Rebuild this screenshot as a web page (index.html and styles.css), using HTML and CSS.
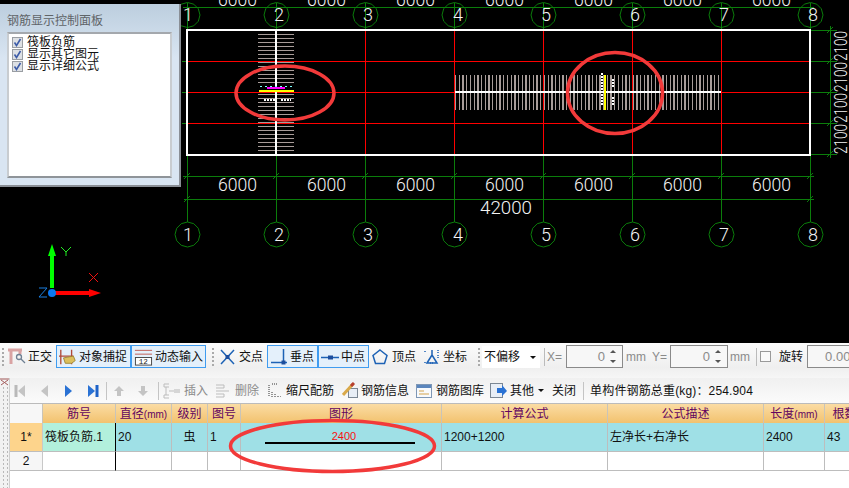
FILE: index.html
```html
<!DOCTYPE html>
<html lang="zh-CN">
<head>
<meta charset="utf-8">
<title>钢筋显示控制面板</title>
<link rel="stylesheet" href="styles.css">
</head>
<body>
<div class="app">
  <section class="cad">
    <svg class="drawing" width="849" height="343" viewBox="0 0 849 343">
      <defs>
        <polygon id="bubble" points="12.5,0 10.8,6.25 6.25,10.8 0,12.5 -6.25,10.8 -10.8,6.25 -12.5,0 -10.8,-6.25 -6.25,-10.8 0,-12.5 6.25,-10.8 10.8,-6.25"/>
      </defs>
      <g class="green crisp">
        <path d="M187.5 3V30M276.5 3V30M365.5 3V30M454.5 3V30M543.5 3V30M632.5 3V30M721.5 3V30M810.5 3V30"/>
        <path d="M187.5 155V222M276.5 155V222M365.5 155V222M454.5 155V222M543.5 155V222M632.5 155V222M721.5 155V222M810.5 155V222"/>
        <path d="M183 7.5H814M183 176.5H814M184 199.5H814"/>
        <path d="M182 61.5H187M182 92.5H187M182 123.5H187"/>
        <path d="M810 30.5H837M810 61.5H837M810 92.5H837M810 123.5H837M810 154.5H837M830.5 26V158"/>
      </g>
      <g class="green">
        <path d="M184 179l6-6M273 179l6-6M362 179l6-6M451 179l6-6M540 179l6-6M629 179l6-6M718 179l6-6M807 179l6-6M184 202l6-6M807 202l6-6"/>
        <path d="M827 33l6-6M827 64l6-6M827 95l6-6M827 126l6-6M827 157l6-6"/>
        <use href="#bubble" x="187.5" y="15"/><use href="#bubble" x="276.5" y="15"/><use href="#bubble" x="365.5" y="15"/><use href="#bubble" x="454.5" y="15"/>
        <use href="#bubble" x="543.5" y="15"/><use href="#bubble" x="632.5" y="15"/><use href="#bubble" x="721.5" y="15"/><use href="#bubble" x="810.5" y="15"/>
        <use href="#bubble" x="187.5" y="234.5"/><use href="#bubble" x="276.5" y="234.5"/><use href="#bubble" x="365.5" y="234.5"/><use href="#bubble" x="454.5" y="234.5"/>
        <use href="#bubble" x="543.5" y="234.5"/><use href="#bubble" x="632.5" y="234.5"/><use href="#bubble" x="721.5" y="234.5"/><use href="#bubble" x="810.5" y="234.5"/>
      </g>
      <path class="red crisp" d="M187 61.5H810M187 92.5H810M187 123.5H810M276.5 30V155M365.5 30V155M454.5 30V155M543.5 30V155M632.5 30V155M721.5 30V155"/>
      <line class="hatch crisp" x1="276" y1="30" x2="276" y2="155"/>
      <line class="hatch hatch-wide crisp" x1="455" y1="92.5" x2="721" y2="92.5"/>
      <path class="rebar" d="M276 30V155M455 92H721"/>
      <g class="detail crisp">
        <path class="d-black" d="M258 88.5H294"/>
        <path class="d-cyan" d="M260 86.5H294"/>
        <path class="d-magenta" d="M267 87.5H285"/>
        <path class="d-yellow" d="M259 91H294M604.5 75V110"/>
        <path class="d-dots" d="M264 99.5H275M281 99.5H291M602 73V105M612.5 79V87M612.5 97V105"/>
      </g>
      <rect class="outline" x="187" y="30" width="623" height="125"/>
      <g class="label">
        <text x="218" y="6" textLength="39" lengthAdjust="spacingAndGlyphs">6000</text><text x="307" y="6" textLength="39" lengthAdjust="spacingAndGlyphs">6000</text><text x="396" y="6" textLength="39" lengthAdjust="spacingAndGlyphs">6000</text><text x="485" y="6" textLength="39" lengthAdjust="spacingAndGlyphs">6000</text><text x="574" y="6" textLength="39" lengthAdjust="spacingAndGlyphs">6000</text><text x="663" y="6" textLength="39" lengthAdjust="spacingAndGlyphs">6000</text><text x="752" y="6" textLength="39" lengthAdjust="spacingAndGlyphs">6000</text>
        <text x="218" y="191" textLength="39" lengthAdjust="spacingAndGlyphs">6000</text><text x="307" y="191" textLength="39" lengthAdjust="spacingAndGlyphs">6000</text><text x="396" y="191" textLength="39" lengthAdjust="spacingAndGlyphs">6000</text><text x="485" y="191" textLength="39" lengthAdjust="spacingAndGlyphs">6000</text><text x="574" y="191" textLength="39" lengthAdjust="spacingAndGlyphs">6000</text><text x="663" y="191" textLength="39" lengthAdjust="spacingAndGlyphs">6000</text><text x="752" y="191" textLength="39" lengthAdjust="spacingAndGlyphs">6000</text>
        <text x="480" y="214" textLength="52" lengthAdjust="spacingAndGlyphs">42000</text>
        <text transform="translate(847 154) rotate(-90)" textLength="30" lengthAdjust="spacingAndGlyphs">2100</text>
        <text transform="translate(847 123) rotate(-90)" textLength="30" lengthAdjust="spacingAndGlyphs">2100</text>
        <text transform="translate(847 92) rotate(-90)" textLength="30" lengthAdjust="spacingAndGlyphs">2100</text>
        <text transform="translate(847 61) rotate(-90)" textLength="30" lengthAdjust="spacingAndGlyphs">2100</text>
      </g>
      <g class="label axis-no">
        <text x="188" y="21">1</text><text x="279" y="21">2</text><text x="368" y="21">3</text><text x="458" y="21">4</text><text x="546" y="21">5</text><text x="635" y="21">6</text><text x="724" y="21">7</text><text x="813" y="21">8</text>
        <text x="188" y="241">1</text><text x="279" y="241">2</text><text x="368" y="241">3</text><text x="458" y="241">4</text><text x="546" y="241">5</text><text x="635" y="241">6</text><text x="724" y="241">7</text><text x="813" y="241">8</text>
      </g>
      <g class="ucs">
        <path class="u-green" d="M52 250V288" />
        <polygon class="u-green-f" points="52,244 56,256 48,256"/>
        <path class="u-red" d="M52 293H92"/>
        <polygon class="u-red-f" points="101,293 89,289 89,297"/>
        <circle class="u-blue-f" cx="52" cy="293" r="4"/>
        <path class="u-thin-g" d="M61 247L66 252L71 247M66 252V256"/>
        <path class="u-thin-r" d="M89 273L98 282M98 273L89 282"/>
        <path class="u-thin-b" d="M39 288H47L39 297H47"/>
      </g>
    </svg>
    <aside class="panel">
      <h2 class="panel-title">钢筋显示控制面板</h2>
      <ul class="panel-list">
        <li class="panel-item"><span class="check"><svg width="9" height="9" viewBox="0 0 9 9"><path d="M1.5 4.5L3.5 7.5L7.5 1" /></svg></span>筏板负筋</li>
        <li class="panel-item"><span class="check"><svg width="9" height="9" viewBox="0 0 9 9"><path d="M1.5 4.5L3.5 7.5L7.5 1" /></svg></span>显示其它图元</li>
        <li class="panel-item"><span class="check"><svg width="9" height="9" viewBox="0 0 9 9"><path d="M1.5 4.5L3.5 7.5L7.5 1" /></svg></span>显示详细公式</li>
      </ul>
    </aside>
  </section>

  <div class="toolbar snapbar">
    <span class="grip m2"></span>
    <svg class="m4" width="19" height="17" viewBox="0 0 19 17"><path class="ic-pink" d="M0 2H14M3 2V16M12 2V6"/><circle class="ic-lens" cx="11" cy="9" r="2.5"/><path class="ic-lens" d="M13 11L17 15"/></svg>
    <span class="tlabel m1">正交</span>
    <span class="tbtn w75 m4"><svg width="18" height="18" viewBox="0 0 20 18"><path class="ic-red" d="M2 1V17M14 1V17M0 8H16"/><path class="ic-hand" d="M5 10L16 8L18 13L14 16H7Z"/></svg><span class="tlabel">对象捕捉</span></span>
    <span class="tbtn w75"><svg width="19" height="18" viewBox="0 0 20 18"><path class="ic-red-thin" d="M1 2H19M1 6H19"/><rect class="ic-box" x="1.5" y="9.5" width="17" height="8"/><text class="ic-num" x="5" y="16.500">12</text></svg><span class="tlabel">动态输入</span></span>
    <span class="grip m6"></span>
    <svg class="m6" width="15" height="16" viewBox="0 0 15 16"><path class="ic-blue" d="M1 1L14 15M14 1L1 15"/><rect class="ic-blue-f" x="5.500" y="6" width="4" height="4"/></svg>
    <span class="tlabel m4">交点</span>
    <span class="tbtn w51 m4"><svg width="18" height="18" viewBox="0 0 18 18"><path class="ic-blue" d="M1 14.500H17M13.500 1V14"/><rect class="ic-blue-f" x="11.500" y="12.500" width="4" height="4"/></svg><span class="tlabel">垂点</span></span>
    <span class="tbtn w51"><svg width="18" height="18" viewBox="0 0 18 18"><path class="ic-blue" d="M0 9.500H18"/><rect class="ic-blue-f" x="7" y="7.500" width="5" height="4"/></svg><span class="tlabel">中点</span></span>
    <svg class="m3" width="16" height="16" viewBox="0 0 16 16"><polygon class="ic-blue" points="8,1 15,6.500 12.500,14.500 3.500,14.500 1,6.500"/></svg>
    <span class="tlabel m4">顶点</span>
    <svg class="m8" width="16" height="16" viewBox="0 0 16 16"><path class="ic-blue" d="M3 14L8 6L13 14ZM8 6V1"/><path class="ic-dots" d="M1 2V4M14 1V4M1 13V15M14 6V9M6 14H9"/></svg>
    <span class="tlabel m3">坐标</span>
    <span class="grip m11"></span>
    <span class="combo m2">不偏移<i class="caret"></i></span>
    <span class="vsep m4"></span>
    <span class="tlabel dim lat w16 m2">X=</span>
    <span class="spin w57 m3"><span class="spin-val">0</span><span class="spin-arrows"><i class="up"></i><i class="down"></i></span></span>
    <span class="tlabel dim lat w21 m3">mm</span>
    <span class="tlabel dim lat w15 m5">Y=</span>
    <span class="spin w58 m3"><span class="spin-val">0</span><span class="spin-arrows"><i class="up"></i><i class="down"></i></span></span>
    <span class="tlabel dim lat w21 m2">mm</span>
    <span class="vsep m5"></span>
    <span class="box m3"></span>
    <span class="tlabel m8">旋转</span>
    <span class="spin spin-cut w60 m4"><span class="spin-val">0.00</span></span>
  </div>

  <div class="lower">
    <div class="gutter">
      <svg class="gutter-close" width="9" height="8" viewBox="0 0 9 8"><path d="M0 1H9M1 2L8 7M8 2L1 7"/></svg>
    </div>
    <main class="editor">
      <div class="toolbar rebarbar">
        <svg class="m4" width="12" height="14" viewBox="0 0 12 14"><path class="nv-off" d="M2 1V13"/><polygon class="nv-off-f" points="11,1 4,7 11,13"/></svg>
        <svg class="m13" width="12" height="14" viewBox="0 0 12 14"><polygon class="nv-off-f" points="9,1 2,7 9,13"/></svg>
        <svg class="m11" width="12" height="14" viewBox="0 0 12 14"><polygon class="nv-on-f" points="3,1 10,7 3,13"/></svg>
        <svg class="m13" width="12" height="14" viewBox="0 0 12 14"><polygon class="nv-on-f" points="1,1 8,7 1,13"/><path class="nv-on" d="M10 1V13"/></svg>
        <span class="vsep short m7"></span>
        <svg class="m6" width="12" height="12" viewBox="0 0 12 12"><polygon class="nv-off-f" points="6,1 11,6 8,6 8,11 4,11 4,6 1,6"/></svg>
        <svg class="m12" width="12" height="12" viewBox="0 0 12 12"><polygon class="nv-off-f" points="6,11 11,6 8,6 8,1 4,1 4,6 1,6"/></svg>
        <span class="vsep short m9"></span>
        <svg class="m4" width="17" height="16" viewBox="0 0 17 16"><path class="ic-gray" d="M6 1H1V4H6M6 12H1V15H6M6 8H11M3 4V12"/><rect class="ic-gray-f" x="11" y="6" width="6" height="4"/></svg>
        <span class="tlabel dim m4">插入</span>
        <svg class="m7" width="15" height="16" viewBox="0 0 15 16"><path class="ic-gray" d="M1 2H9V5H1M1 11H9V14H1M1 8H14"/></svg>
        <span class="tlabel dim m5">删除</span>
        <svg class="m9" width="13" height="15" viewBox="0 0 13 15"><path class="ic-dark" d="M1 2V14M4 1H10M4 14V8M7 14V10M10 14V12M13 14V13"/></svg>
        <span class="tlabel m5">缩尺配筋</span>
        <svg class="m8" width="17" height="17" viewBox="0 0 17 17"><rect class="ic-sheet" x="6.500" y="6.500" width="9" height="9"/><path class="ic-pencil" d="M1 13L11 2"/><path class="ic-pen-tip" d="M9 4L12 1"/></svg>
        <span class="tlabel m2">钢筋信息</span>
        <svg class="m7" width="16" height="14" viewBox="0 0 16 14"><rect class="ic-win" x="0.500" y="0.500" width="15" height="13"/><path class="ic-win-bar" d="M1 2.500H15"/><path class="ic-win-line" d="M3 7H8M3 10H13"/></svg>
        <span class="tlabel m4">钢筋图库</span>
        <svg class="m6" width="17" height="15" viewBox="0 0 17 15"><rect class="ic-sheet" x="0.500" y="0.500" width="12" height="14"/><polygon class="nv-on-f" points="7,5 12,5 12,2 17,8 12,13 12,10 7,10"/></svg>
        <span class="tlabel m3">其他</span>
        <i class="caret small m4"></i>
        <span class="tlabel m8">关闭</span>
        <span class="vsep short m7"></span>
        <span class="tlabel lat total m6">单构件钢筋总重(kg)：254.904</span>
      </div>
      <div class="grid-wrap">
        <table class="grid">
          <colgroup>
            <col class="c-row"><col class="c-no"><col class="c-dia"><col class="c-grade"><col class="c-fig"><col class="c-shape"><col class="c-calc"><col class="c-desc"><col class="c-len"><col class="c-qty">
          </colgroup>
          <thead>
            <tr><th class="corner"></th><th>筋号</th><th>直径<span class="unit">(mm)</span></th><th>级别</th><th>图号</th><th>图形</th><th>计算公式</th><th>公式描述</th><th>长度<span class="unit">(mm)</span></th><th>根数</th></tr>
          </thead>
          <tbody>
            <tr class="row-active">
              <td class="rowhead active">1*</td><td class="mint freeze">筏板负筋.1</td><td>20</td><td class="center">虫</td><td>1</td>
              <td class="shape"><span class="shape-dim">2400</span><span class="shape-bar"></span></td>
              <td>1200+1200</td><td>左净长+右净长</td><td>2400</td><td>43</td>
            </tr>
            <tr class="row-empty">
              <td class="rowhead">2</td><td class="freeze"></td><td></td><td></td><td></td><td></td><td></td><td></td><td></td><td></td>
            </tr>
          </tbody>
        </table>
      </div>
    </main>
  </div>
</div>
<svg class="marks" width="849" height="488" viewBox="0 0 849 488">
  <ellipse cx="285" cy="93" rx="49" ry="27"/>
  <ellipse cx="615" cy="93" rx="47.500" ry="40.500"/>
  <ellipse cx="332.500" cy="446" rx="102" ry="25.500"/>
</svg>
</body>
</html>
```

FILE: styles.css
```css
* { box-sizing: border-box; }
html, body { margin: 0; padding: 0; }
body {
  position: relative;
  width: 849px;
  height: 488px;
  overflow: hidden;
  background: #fff;
  font: 12px/1 "Liberation Sans", "Noto Sans CJK SC", sans-serif;
  color: #111;
}
.app { display: flex; flex-direction: column; height: 488px; }

/* CAD canvas */
.cad { position: relative; height: 343px; flex: none; background: #000; overflow: hidden; }
.drawing { display: block; }
.drawing path, .drawing polygon, .drawing line, .drawing rect { fill: none; }
.crisp { shape-rendering: crispEdges; }
.green path, .green use { stroke: #0b7d0b; stroke-width: 1; fill: none; }
.red { stroke: #f00; stroke-width: 1; }
.hatch { stroke: #a89c99; stroke-width: 36; stroke-dasharray: 1 3; }
.hatch-wide { stroke-width: 35; stroke-dasharray: 1.300 2.400; }
.rebar { stroke: #fff; stroke-width: 2; }
.outline { stroke: #fff; stroke-width: 2; }
.d-black { stroke: #000; stroke-width: 6; }
.d-cyan { stroke: #7ff; stroke-width: 1; stroke-dasharray: 2 3; }
.d-magenta { stroke: #f0f; stroke-width: 2; }
.d-yellow { stroke: #ff0; stroke-width: 2; }
.d-dots { stroke: #fff; stroke-width: 2; stroke-dasharray: 2 1; }
.label text { fill: #f4f4f4; font: 300 19px "Roboto", "Liberation Sans", sans-serif; }
.axis-no { text-anchor: middle; }
.axis-no text { font-size: 18px; }
.ucs .u-green { stroke: #0f0; stroke-width: 4; }
.ucs .u-green-f { fill: #0f0; }
.ucs .u-red { stroke: #f00; stroke-width: 4; }
.ucs .u-red-f { fill: #f00; }
.ucs .u-blue-f { fill: #0a78f0; }
.ucs .u-thin-g { stroke: #2e2; }
.ucs .u-thin-r { stroke: #e11; }
.ucs .u-thin-b { stroke: #1a7fe0; }

/* floating panel */
.panel {
  position: absolute;
  left: 0;
  top: 4px;
  width: 181px;
  height: 183px;
  padding: 11px 7px 8px;
  background: linear-gradient(#bccede, #d9e5f2 30%);
  border-right: 2px solid #8a8f96;
  border-bottom: 2px solid #8a8f96;
}
.panel-title { margin: 0 0 5px; font-size: 12px; font-weight: 400; line-height: 12px; color: #5f6468; }
.panel-list {
  margin: 0;
  padding: 2px 3px;
  height: 146px;
  list-style: none;
  background: #fff;
  border: 2px solid;
  border-color: #a4a8ad #c8ccd0 #8f9499 #c8ccd0;
}
.panel-item { display: flex; align-items: center; gap: 4px; height: 12px; line-height: 12px; white-space: nowrap; }
.check { display: flex; flex: none; align-items: center; justify-content: center; width: 11px; height: 11px; background: #dde0e4; border: 1px solid #9a9ea3; }
.check path { fill: none; stroke: #3d5ca8; stroke-width: 1.600; }

/* toolbars */
.toolbar { display: flex; align-items: center; white-space: nowrap; flex: none; }
.toolbar svg { flex: none; display: block; }
.snapbar { height: 35px; padding-bottom: 8px; background: linear-gradient(#fbfbfb, #efefef 70%, #f6f6f6); }
.rebarbar { height: 25px; background: linear-gradient(#f0f0f0, #fbfbfb); }
.tlabel { line-height: 14px; flex: none; }
.dim { color: #8b8b8b; }
.lat { font-size: 12px; }
.total { letter-spacing: 0.150px; }
.grip { flex: none; width: 2px; height: 18px; background: repeating-linear-gradient(#aaa 0 2px, transparent 2px 4px); }
.tbtn { flex: none; display: flex; align-items: center; gap: 2px; height: 23px; padding-left: 2px; background: #e4f0fb; border: 1px solid #3f9cf0; }
.w75 { width: 75px; }
.w51 { width: 51px; }
.w16 { width: 16px; }
.w15 { width: 15px; }
.w21 { width: 21px; }
.w57 { width: 57px; }
.w58 { width: 58px; }
.w60 { width: 60px; }
.combo { flex: none; position: relative; display: flex; align-items: center; width: 58px; height: 22px; padding-left: 2px; background: #fff; }
.caret { flex: none; width: 0; height: 0; border: 3px solid transparent; border-top: 3px solid #111; border-bottom: 0; }
.combo .caret { position: absolute; right: 4px; top: 10px; }
.vsep { flex: none; width: 1px; height: 18px; background: #bbb; }
.vsep.short { background: #c4c4c4; }
.spin { flex: none; display: flex; align-items: center; justify-content: flex-end; height: 23px; padding-right: 6px; background: #f7f7f7; border: 1px solid #8a8a8a; color: #8b8b8b; font-size: 13px; }
.spin-cut { justify-content: flex-start; padding: 0 0 0 17px; }
.spin-val { margin-right: 5px; }
.spin-arrows { display: flex; flex-direction: column; gap: 7px; }
.spin-arrows i { width: 0; height: 0; border: 3px solid transparent; }
.spin-arrows .up { border-top: 0; border-bottom: 3px solid #555; }
.spin-arrows .down { border-bottom: 0; border-top: 3px solid #555; }
.box { flex: none; width: 11px; height: 11px; background: #fafafa; border: 1px solid #9a9a9a; }

/* spacing */
.m1 { margin-left: 1px; }
.m2 { margin-left: 2px; }
.m3 { margin-left: 3px; }
.m4 { margin-left: 4px; }
.m5 { margin-left: 5px; }
.m6 { margin-left: 6px; }
.m7 { margin-left: 7px; }
.m8 { margin-left: 8px; }
.m9 { margin-left: 9px; }
.m11 { margin-left: 11px; }
.m12 { margin-left: 12px; }
.m13 { margin-left: 13px; }

/* icons */
.ic-pink { fill: none; stroke: #d9a3a3; stroke-width: 3; }
.ic-lens { fill: none; stroke: #6f7f92; stroke-width: 1.300; }
.ic-red { fill: none; stroke: #b04a3a; stroke-width: 1.500; }
.ic-hand { fill: #dcbf5c; stroke: #9c8432; }
.ic-red-thin { fill: none; stroke: #c05a50; stroke-width: 1; }
.ic-box { fill: #fff; stroke: #444; }
.ic-num { fill: #222; font: 8px "Liberation Mono", monospace; }
.ic-blue { fill: none; stroke: #1d62b5; stroke-width: 1.500; }
.ic-blue-f { fill: #1d4e9e; }
.ic-dots { fill: none; stroke: #1d62b5; stroke-width: 1.500; stroke-dasharray: 1 1; }
.nv-off { fill: none; stroke: #b9b9b9; stroke-width: 3; }
.nv-off-f { fill: #c4c4c4; }
.nv-on { fill: none; stroke: #1d62c8; stroke-width: 3; }
.nv-on-f { fill: #2a72d4; }
.ic-gray { fill: none; stroke: #bdbdbd; }
.ic-gray-f { fill: #d6d6d6; }
.ic-dark { fill: none; stroke: #333; stroke-width: 1; stroke-dasharray: 1 1; }
.ic-sheet { fill: #e8eef6; stroke: #7b8794; }
.ic-pencil { fill: none; stroke: #d9a94a; stroke-width: 3; }
.ic-pen-tip { fill: none; stroke: #b8402f; stroke-width: 3; }
.ic-win { fill: #f8fafc; stroke: #7e97b5; }
.ic-win-bar { fill: none; stroke: #5b86bd; stroke-width: 3; }
.ic-win-line { fill: none; stroke: #d3a34d; }

/* lower area */
.lower { flex: 1; display: flex; min-height: 0; }
.gutter {
  flex: none;
  width: 10px;
  padding-top: 0;
  background: #f2f2f2 radial-gradient(circle at 4px 2px, #b9b9b9 1px, transparent 1.300px) 0 8px / 4px 4px repeat;
  border-right: 1px solid #cfcfcf;
}
.gutter-close { display: block; background: #f2f2f2; }
.gutter-close path { fill: none; stroke: #a25a5a; }
.editor { flex: 1; min-width: 0; overflow: hidden; }
.grid-wrap { border-top: 1px solid #bbb; height: 85px; overflow: hidden; }
.grid { width: 855px; table-layout: fixed; border-collapse: separate; border-spacing: 0; }
.c-row { width: 33px; }
.c-no { width: 73px; }
.c-dia { width: 56px; }
.c-grade { width: 36px; }
.c-fig { width: 33px; }
.c-shape { width: 201px; }
.c-calc { width: 166px; }
.c-desc { width: 156px; }
.c-len { width: 61px; }
.c-qty { width: 40px; }
.grid th {
  height: 19px;
  padding: 0;
  font-weight: 400;
  color: #62045f;
  background: linear-gradient(#fbdca4, #f2c26e);
  border-right: 1px solid #c9c4b8;
  white-space: nowrap;
  overflow: hidden;
}
.unit { font-size: 10px; }
.grid .corner { background: #f7f7f7; }
.grid td {
  padding: 0 0 0 2px;
  border-right: 1px solid #bdbdbd;
  border-bottom: 1px solid #bdbdbd;
  white-space: nowrap;
  overflow: hidden;
}
.row-active td { height: 29px; background: #9fe0e6; }
.row-empty td { height: 19px; background: #fff; }
.grid .rowhead { padding: 0; text-align: center; background: #f6f6f6; border-right-color: #c8c8c8; }
.grid .rowhead.active { background: #fdd48c; }
.grid .mint { background: #b2f0dc; }
.grid .freeze { border-right: 1px solid #000; }
.grid .center { padding: 0; text-align: center; }
.grid .shape { padding: 7px 0 0; text-align: center; vertical-align: top; }
.shape-dim { display: block; color: #f81010; font-size: 11px; line-height: 12px; padding-left: 6px; }
.shape-bar { display: block; width: 150px; height: 2px; margin: 0 0 0 24px; background: #000; }

/* hand-drawn annotation rings over everything */
.marks { position: absolute; left: 0; top: 0; pointer-events: none; }
.marks ellipse { fill: none; stroke: #f23a3a; stroke-width: 3.500; }
```
